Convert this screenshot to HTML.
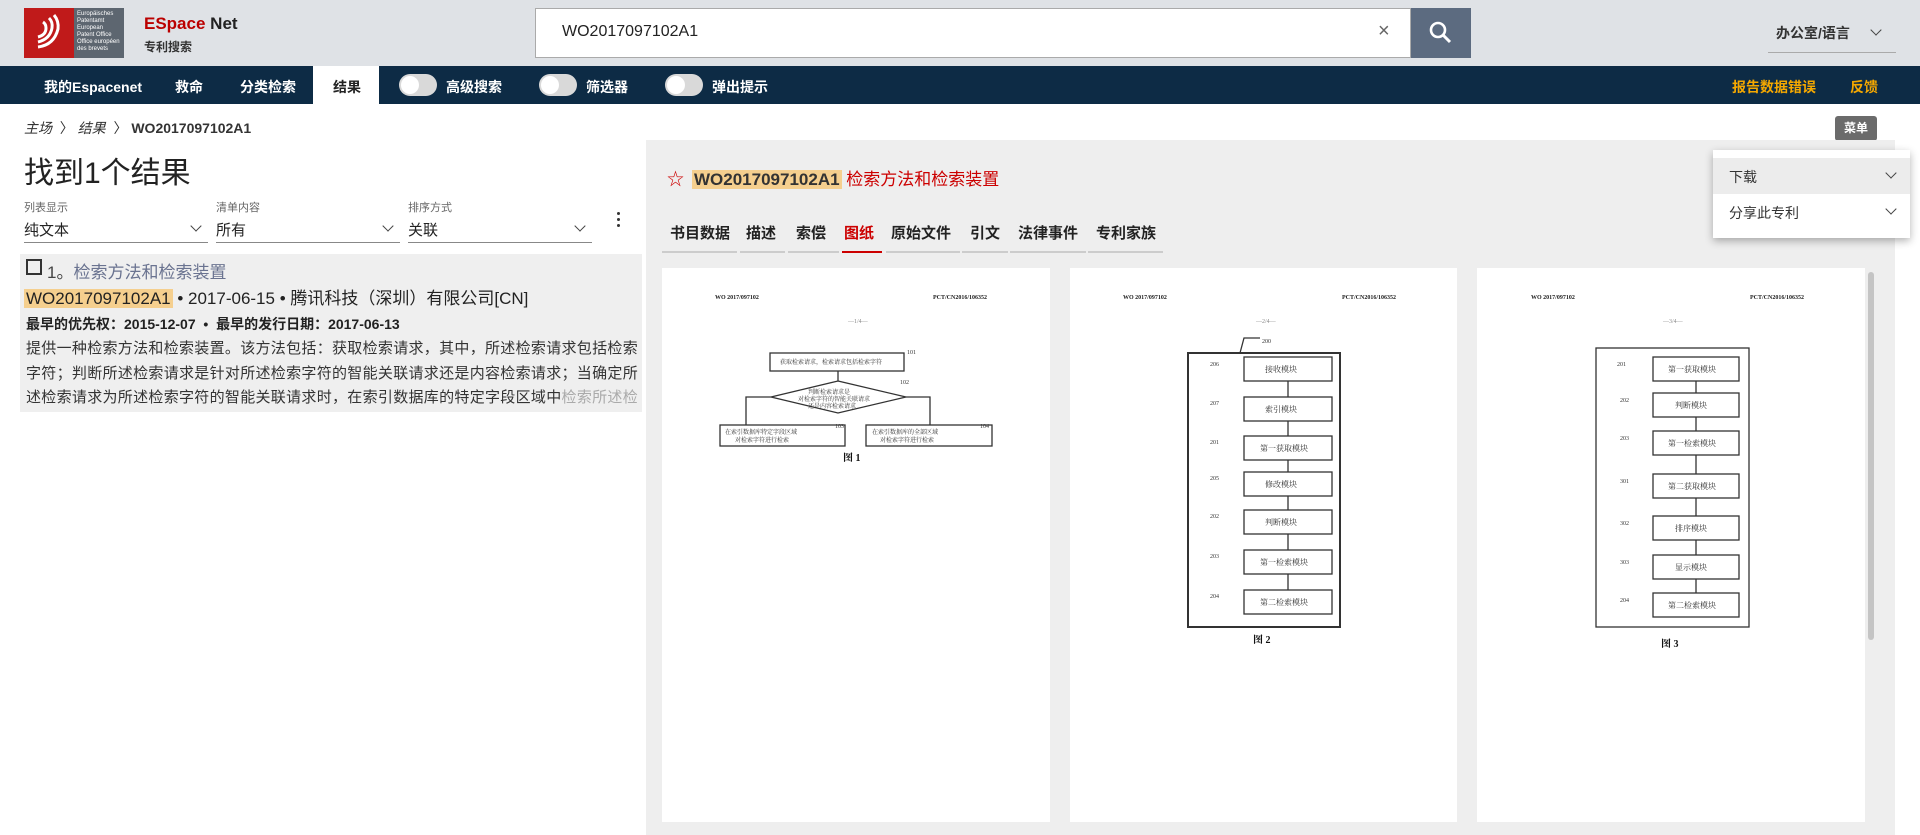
<!DOCTYPE html>
<html><head><meta charset="utf-8"><style>
*{margin:0;padding:0;box-sizing:border-box}
body{width:1920px;height:835px;overflow:hidden;background:#fff;font-family:"Liberation Sans","Noto Sans CJK SC",sans-serif;color:#222;position:relative}
.a{position:absolute;white-space:nowrap}
.nav{font-size:14px;font-weight:bold;color:#fff;top:77px}
.tg{position:absolute;top:74px;width:38px;height:22px;border-radius:11px;background:#d9d9d9}
.tg::after{content:"";position:absolute;left:2px;top:2px;width:18px;height:18px;border-radius:50%;background:#fff}
.lbl{font-size:11px;color:#666;top:199px}
.val{font-size:15px;color:#222;top:219px}
.ul{position:absolute;top:242px;height:1px;background:#888}
.chev{position:absolute;width:8px;height:8px;border-right:1.6px solid #444;border-bottom:1.6px solid #444;transform:rotate(45deg)}
.tab{font-size:15px;font-weight:bold;color:#222;top:222px}
.tu{position:absolute;top:251px;height:1.5px;background:#ccc}
.page{position:absolute;top:268px;height:554px;background:#fff}
svg text{font-family:"Liberation Serif","Noto Serif CJK SC",serif}
</style></head><body>
<div class="a" style="left:0;top:0;width:1920px;height:66px;background:#dfe2e6"></div>
<div class="a" style="left:24px;top:8px;width:100px;height:50px;background:#5d6670"></div>
<div class="a" style="left:24px;top:8px;width:50px;height:50px;background:#c01a1a"></div>
<svg class="a" style="left:28px;top:11px" width="44" height="44" viewBox="0 0 44 44"><g fill="none" stroke="#fff" stroke-width="3"><path d="M10 36 Q26 34 30 18 Q31 10 26 4"/><path d="M10 31 Q22 28 24 17 Q25 11 21 7"/><path d="M10 26 Q18 24 18 17 Q18 13 15 11"/></g></svg>
<div class="a" style="left:77px;top:11px;font-size:6px;line-height:7px;color:#fff">Europäisches<br>Patentamt<br>European<br>Patent Office<br>Office européen<br>des brevets</div>
<div class="a" style="left:144px;top:14px;font-size:17px;font-weight:bold;color:#222"><span style="color:#b00">ESpace</span> Net</div>
<div class="a" style="left:144px;top:38px;font-size:12px;font-weight:bold;color:#333">专利搜索</div>
<div class="a" style="left:535px;top:8px;width:876px;height:50px;background:#fff;border:1.5px solid #aaa"></div>
<div class="a" style="left:562px;top:23px;font-size:16px;color:#222">WO2017097102A1</div>
<div class="a" style="left:1378px;top:20px;font-size:20px;color:#666">×</div>
<div class="a" style="left:1411px;top:8px;width:60px;height:50px;background:#5c6b80"></div>
<svg class="a" style="left:1428px;top:20px" width="26" height="26"><circle cx="10" cy="10" r="7" fill="none" stroke="#fff" stroke-width="2.6"/><path d="M15 15 L22 22" stroke="#fff" stroke-width="3"/></svg>
<div class="a" style="left:1776px;top:23px;font-size:14px;font-weight:bold;color:#333">办公室/语言</div>
<div class="chev" style="left:1872px;top:26px"></div>
<div class="a" style="left:1768px;top:52px;width:128px;height:1px;background:#aaa"></div>

<div class="a" style="left:0;top:66px;width:1920px;height:38px;background:#0d2b45"></div>
<div class="a" style="left:313px;top:66px;width:66px;height:38px;background:#fff"></div>
<div class="a nav" style="left:44px">我的Espacenet</div>
<div class="a nav" style="left:175px">救命</div>
<div class="a nav" style="left:240px">分类检索</div>
<div class="a nav" style="left:333px;color:#222">结果</div>
<div class="tg" style="left:399px"></div><div class="a nav" style="left:446px">高级搜索</div>
<div class="tg" style="left:539px"></div><div class="a nav" style="left:586px">筛选器</div>
<div class="tg" style="left:665px"></div><div class="a nav" style="left:712px">弹出提示</div>
<div class="a nav" style="left:1732px;color:#f5a800">报告数据错误</div>
<div class="a nav" style="left:1850px;color:#f5a800">反馈</div>

<div class="a" style="left:24px;top:118px;font-size:14px;color:#333"><i>主场</i> &nbsp;〉 <i>结果</i> &nbsp;〉 <b>WO2017097102A1</b></div>
<div class="a" style="left:1835px;top:116px;width:42px;height:25px;background:#6b6b6b;border-radius:3px;color:#fff;font-size:12px;font-weight:bold;text-align:center;line-height:25px">菜单</div>

<div class="a" style="left:24px;top:148px;font-size:30px;color:#222">找到1个结果</div>
<div class="a lbl" style="left:24px">列表显示</div><div class="a lbl" style="left:216px">清单内容</div><div class="a lbl" style="left:408px">排序方式</div>
<div class="a val" style="left:24px">纯文本</div><div class="a val" style="left:216px">所有</div><div class="a val" style="left:408px">关联</div>
<div class="chev" style="left:192px;top:222px"></div><div class="chev" style="left:384px;top:222px"></div><div class="chev" style="left:576px;top:222px"></div>
<div class="ul" style="left:24px;width:184px"></div><div class="ul" style="left:216px;width:184px"></div><div class="ul" style="left:408px;width:184px"></div>
<div class="a" style="left:617px;top:212px;width:3px;line-height:6px;font-size:0">
<div style="width:3px;height:3px;background:#333;border-radius:50%;margin-bottom:3px"></div><div style="width:3px;height:3px;background:#333;border-radius:50%;margin-bottom:3px"></div><div style="width:3px;height:3px;background:#333;border-radius:50%"></div></div>

<div class="a" style="left:20px;top:254px;width:622px;height:158px;background:#efefef"></div>
<div class="a" style="left:26px;top:259px;width:16px;height:16px;border:2px solid #333"></div>
<div class="a" style="left:47px;top:258px;font-size:17px;color:#444">1。<span style="color:#6a7390">检索方法和检索装置</span></div>
<div class="a" style="left:24px;top:284px;font-size:17px;color:#222"><span style="background:#f5cf8e;padding:0 2px">WO2017097102A1</span> • 2017-06-15 • 腾讯科技（深圳）有限公司[CN]</div>
<div class="a" style="left:26px;top:314px;font-size:14px;font-weight:bold;color:#222">最早的优先权：2015-12-07 &nbsp;• &nbsp;最早的发行日期：2017-06-13</div>
<div class="a" style="left:26px;top:337px;font-size:15px;letter-spacing:0.3px;line-height:24.5px;color:#333;white-space:normal;width:620px;height:74px;overflow:hidden">提供一种检索方法和检索装置。该方法包括：获取检索请求，其中，所述检索请求包括检索字符；判断所述检索请求是针对所述检索字符的智能关联请求还是内容检索请求；当确定所述检索请求为所述检索字符的智能关联请求时，在索引数据库的特定字段区域中<span style="color:#aaa">检索所述检</span></div>

<div class="a" style="left:646px;top:140px;width:1249px;height:695px;background:#eee"></div>
<div class="a" style="left:667px;top:165px;font-size:17px;color:#c00">☆</div>
<div class="a" style="left:692px;top:165px;font-size:17px;color:#c00"><span style="background:#f5cf8e;color:#333;font-weight:bold;padding:0 2px">WO2017097102A1</span> 检索方法和检索装置</div>
<div class="a tab" style="left:670px">书目数据</div><div class="tu" style="left:662px;width:75px"></div>
<div class="a tab" style="left:746px">描述</div><div class="tu" style="left:740px;width:45px"></div>
<div class="a tab" style="left:796px">索偿</div><div class="tu" style="left:788px;width:51px"></div>
<div class="a tab" style="left:844px;color:#c00">图纸</div><div class="tu" style="left:842px;width:40px;background:#c00;height:2px"></div>
<div class="a tab" style="left:891px">原始文件</div><div class="tu" style="left:886px;width:74px"></div>
<div class="a tab" style="left:970px">引文</div><div class="tu" style="left:962px;width:46px"></div>
<div class="a tab" style="left:1018px">法律事件</div><div class="tu" style="left:1010px;width:76px"></div>
<div class="a tab" style="left:1096px">专利家族</div><div class="tu" style="left:1088px;width:75px"></div>

<div class="page" style="left:662px;width:388px"></div>
<div class="page" style="left:1070px;width:387px"></div>
<div class="page" style="left:1477px;width:388px"></div>
<div class="a" style="left:1868px;top:272px;width:6px;height:368px;background:#c4c4c4;border-radius:3px"></div>

<svg class="a" style="left:0;top:0" width="1920" height="835" font-size="6">
<g fill="#222" font-weight="bold">
<text x="715" y="299">WO 2017/097102</text><text x="933" y="299">PCT/CN2016/106352</text>
<text x="1123" y="299">WO 2017/097102</text><text x="1342" y="299">PCT/CN2016/106352</text>
<text x="1531" y="299">WO 2017/097102</text><text x="1750" y="299">PCT/CN2016/106352</text>
</g>
<g fill="#888" font-size="6"><text x="848" y="323">—1/4—</text><text x="1256" y="323">—2/4—</text><text x="1663" y="323">—3/4—</text></g>
<g fill="none" stroke="#333" stroke-width="1.3">
<rect x="770" y="353" width="134" height="18"/>
<path d="M838 381 L906 397 L838 413 L771 397 Z"/>
<path d="M838 371 V381 M771 397 H746 V425 M906 397 H930 V425"/>
<rect x="720" y="425" width="125" height="21"/><rect x="866" y="425" width="126" height="21"/>
<rect x="1188" y="353" width="152" height="274" stroke-width="2"/>
<path d="M1240 353 L1244 338 H1260"/>
<rect x="1244" y="357" width="88" height="24"/><rect x="1244" y="397" width="88" height="24"/><rect x="1244" y="436" width="88" height="24"/><rect x="1244" y="472" width="88" height="24"/><rect x="1244" y="510" width="88" height="24"/><rect x="1244" y="550" width="88" height="24"/><rect x="1244" y="590" width="88" height="24"/>
<path d="M1288 381V397M1288 421V436M1288 460V472M1288 496V510M1288 534V550M1288 574V590"/>
<rect x="1596" y="348" width="153" height="279"/>
<rect x="1653" y="357" width="86" height="24"/><rect x="1653" y="393" width="86" height="24"/><rect x="1653" y="431" width="86" height="24"/><rect x="1653" y="474" width="86" height="24"/><rect x="1653" y="516" width="86" height="24"/><rect x="1653" y="555" width="86" height="24"/><rect x="1653" y="593" width="86" height="24"/>
<path d="M1696 381V393M1696 417V431M1696 455V474M1696 498V516M1696 540V555M1696 579V593"/>
</g>
<g fill="#333" font-size="6">
<text x="780" y="364">获取检索请求，检索请求包括检索字符</text>
<text x="808" y="394">判断检索请求是</text><text x="798" y="401">对检索字符的智能关联请求</text><text x="808" y="408">还是内容检索请求</text>
<text x="725" y="434">在索引数据库特定字段区域</text><text x="735" y="442">对检索字符进行检索</text>
<text x="872" y="434">在索引数据库的全部区域</text><text x="880" y="442">对检索字符进行检索</text>
<text x="1262" y="343">200</text>
<g font-size="8"><text x="1265" y="372">接收模块</text><text x="1265" y="412">索引模块</text><text x="1260" y="451">第一获取模块</text><text x="1265" y="487">修改模块</text><text x="1265" y="525">判断模块</text><text x="1260" y="565">第一检索模块</text><text x="1260" y="605">第二检索模块</text>
<text x="1668" y="372">第一获取模块</text><text x="1675" y="408">判断模块</text><text x="1668" y="446">第一检索模块</text><text x="1668" y="489">第二获取模块</text><text x="1675" y="531">排序模块</text><text x="1675" y="570">显示模块</text><text x="1668" y="608">第二检索模块</text></g>
<text x="1210" y="366">206</text><text x="1210" y="405">207</text><text x="1210" y="444">201</text><text x="1210" y="480">205</text><text x="1210" y="518">202</text><text x="1210" y="558">203</text><text x="1210" y="598">204</text>
<text x="1617" y="366">201</text><text x="1620" y="402">202</text><text x="1620" y="440">203</text><text x="1620" y="483">301</text><text x="1620" y="525">302</text><text x="1620" y="564">303</text><text x="1620" y="602">204</text>
<text x="907" y="354">101</text><text x="900" y="384">102</text><text x="835" y="428">103</text><text x="980" y="428">104</text>
</g>
<g fill="#111" font-size="10" font-weight="bold"><text x="843" y="461">图 1</text><text x="1253" y="643">图 2</text><text x="1661" y="647">图 3</text></g>
</svg>

<div class="a" style="left:1713px;top:150px;width:197px;height:88px;background:#fff;box-shadow:0 3px 8px rgba(0,0,0,.3)"></div>
<div class="a" style="left:1713px;top:158px;width:197px;height:36px;background:#ececec"></div>
<div class="a" style="left:1729px;top:167px;font-size:14px;color:#333">下载</div>
<div class="a" style="left:1729px;top:203px;font-size:14px;color:#333">分享此专利</div>
<div class="chev" style="left:1887px;top:169px"></div>
<div class="chev" style="left:1887px;top:205px"></div>
</body></html>
